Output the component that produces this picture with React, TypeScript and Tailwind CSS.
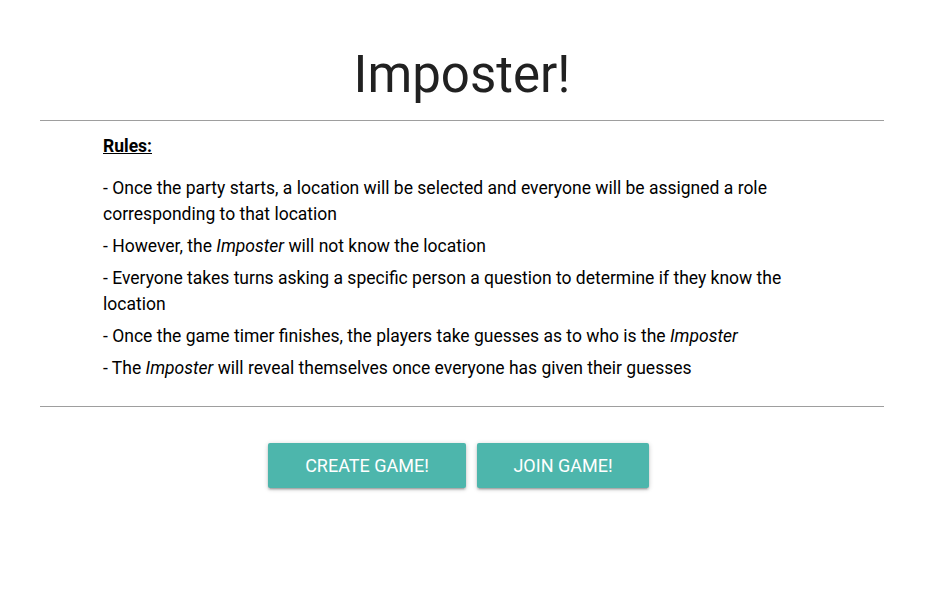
export default function App() {
  return (
    <div className="min-h-[593px] bg-white font-['Roboto',sans-serif] text-black">
      <div className="ml-[40px] mr-[61px]">
        <h1 className="pt-[44px] pb-[15px] text-center text-[51px] leading-[61px] font-normal text-[#212121]">
          Imposter!
        </h1>
        <hr className="border-t border-[#9e9e9e]" />
        <div className="px-[63px] pt-[12px] pb-[25px] text-[17.5px] leading-[26px]">
          <p className="font-bold underline mb-[16px]">Rules:</p>
          <p className="mb-[6px]">
            - Once the party starts, a location will be selected and everyone will be assigned a role corresponding to that location
          </p>
          <p className="mb-[6px]">
            - However, the <i>Imposter</i> will not know the location
          </p>
          <p className="mb-[6px]">
            - Everyone takes turns asking a specific person a question to determine if they know the location
          </p>
          <p className="mb-[6px]">
            - Once the game timer finishes, the players take guesses as to who is the <i>Imposter</i>
          </p>
          <p>
            - The <i>Imposter</i> will reveal themselves once everyone has given their guesses
          </p>
        </div>
        <hr className="border-t border-[#9e9e9e]" />
        <div className="flex justify-center gap-[11px] pt-[36px] pr-[7px]">
          <button className="h-[45px] w-[198px] rounded-[2px] bg-[#4db6ac] text-[18px] text-white uppercase shadow-[0_2px_2px_0_rgba(0,0,0,0.14),0_3px_1px_-2px_rgba(0,0,0,0.12),0_1px_5px_0_rgba(0,0,0,0.2)]">
            Create Game!
          </button>
          <button className="h-[45px] w-[172px] rounded-[2px] bg-[#4db6ac] text-[18px] text-white uppercase shadow-[0_2px_2px_0_rgba(0,0,0,0.14),0_3px_1px_-2px_rgba(0,0,0,0.12),0_1px_5px_0_rgba(0,0,0,0.2)]">
            Join Game!
          </button>
        </div>
      </div>
    </div>
  );
}
